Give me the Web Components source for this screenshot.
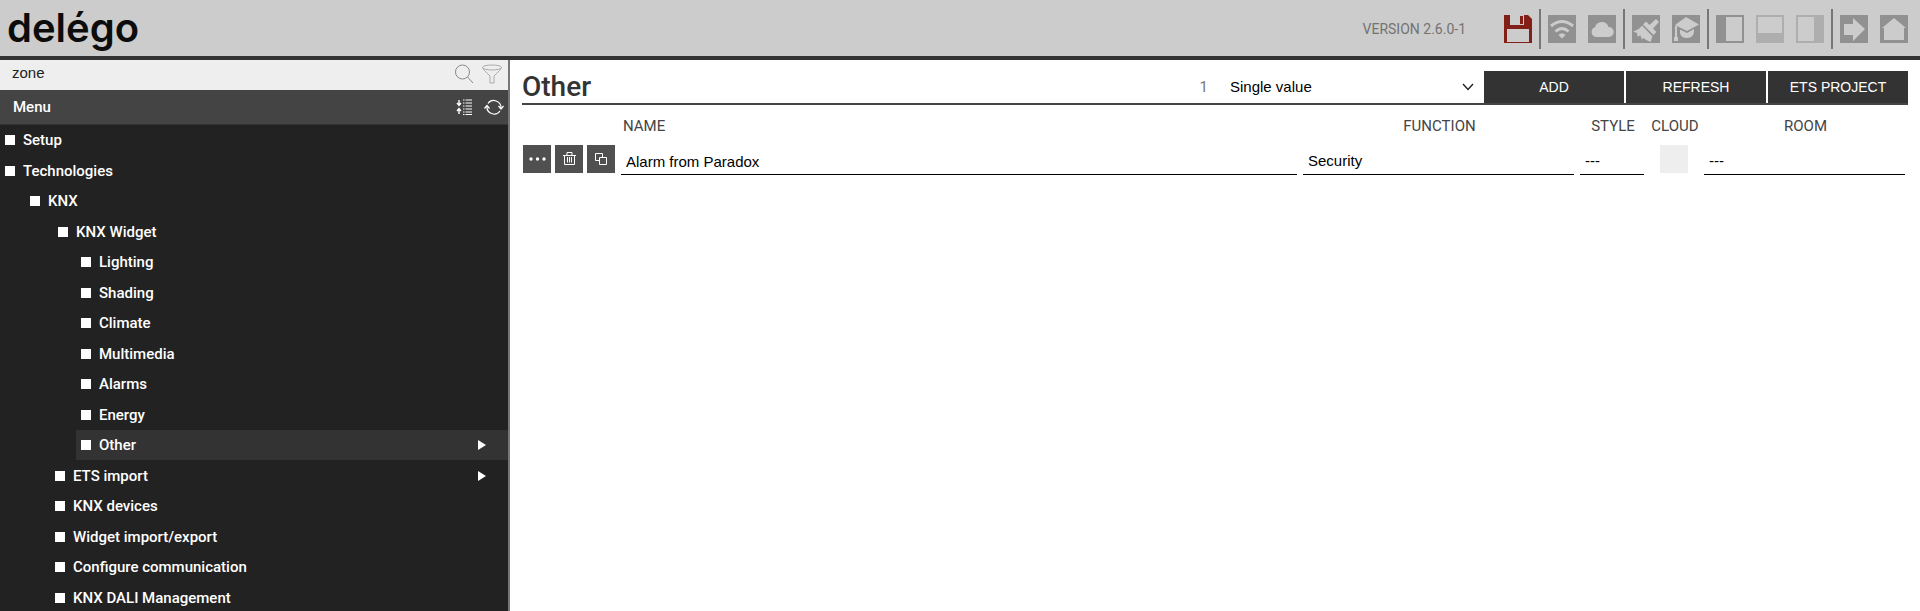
<!DOCTYPE html>
<html lang="en">
<head>
<meta charset="utf-8">
<title>delégo</title>
<style>
html, body { height: 100%; }
body { margin: 0; background: #fff; font-family: Roboto, "Liberation Sans", sans-serif; }
</style>
</head>
<body>
<delego-app></delego-app>
<script>
const define = (name, html, setup) => {
  const t = document.createElement('template');
  t.innerHTML = html;
  customElements.define(name, class extends HTMLElement {
    constructor() {
      super();
      this.attachShadow({ mode: 'open' }).append(t.content.cloneNode(true));
    }
    connectedCallback() { if (setup) setup(this, this.shadowRoot); }
  });
};

/* Toolbar button: a 28px tile with a slotted drawing */
define('tool-button', `
<style>
:host { display: block; }
button { display: block; width: 28px; height: 28px; padding: 0; border: 0; background: none; cursor: pointer; }
</style>
<button type="button"><slot></slot></button>`, (el, root) => {
  root.querySelector('button').setAttribute('aria-label', el.getAttribute('label'));
});

define('app-header', `
<style>
:host { display: flex; align-items: center; justify-content: space-between; box-sizing: border-box; height: 60px;
  padding: 0 12px 0 7px; background: #ccc; border-bottom: 4px solid #333; flex: none; }
a { color: #0c0c0c; text-decoration: none; font: 600 40px/48px Inter, sans-serif; }
nav { display: flex; align-items: center; gap: 12px; padding-top: 2px; }
.version { font-size: 14px; line-height: 20px; color: #737373; margin-right: 26px; }
hr { width: 2px; height: 40px; margin: 0 -5px; border: 0; background: #777; }
svg { display: block; }
</style>
<a href="#">delégo</a>
<nav>
  <span class="version">VERSION 2.6.0-1</span>
  <tool-button label="Save"><svg width="28" height="28"><path fill="#821f17" fill-rule="evenodd" d="M0 0H24L28 4V28H0ZM6 0V10H20V0ZM3 14V27H25V14Z"/><path fill="#ccc" d="M6 0H20V10H6Z"/><path fill="#821f17" d="M16 1H19V9H16Z"/></svg></tool-button>
  <hr>
  <tool-button label="Wi-Fi"><svg width="28" height="28"><path fill="#919191" d="M0 0H28V28H0Z"/><g fill="none" stroke="#ccc" stroke-width="3"><path d="M3 11Q14 2 25 11"/><path d="M7.500 16.500Q14 10.500 20.500 16.500"/></g><path fill="#ccc" d="M10.500 20Q14 16.500 17.500 20L14 23.500Z"/></svg></tool-button>
  <tool-button label="Cloud"><svg width="28" height="28"><path fill="#919191" d="M0 0H28V28H0Z"/><path fill="#ccc" d="M8 22A5 5 0 0 1 7 12.300A7 7 0 0 1 20.500 12A5 5 0 0 1 21 22Z"/></svg></tool-button>
  <hr>
  <tool-button label="Clean"><svg width="28" height="28"><path fill="#919191" d="M0 0H28V28H0Z"/><path fill="#ccc" d="M1 16.500Q7 15 10 10.500L20.500 21.500L18.500 27Q14 25.500 11.500 23L10 24.500L8.500 20.500L5.500 21.500L5 18Z"/><path fill="#ccc" d="M11 9.500L14 6.500L17.500 10L24 4L27 7L21 13.500L24.500 17L21.500 20Z"/></svg></tool-button>
  <tool-button label="Tutorial"><svg width="28" height="28"><path fill="#919191" d="M0 0H28V28H0Z"/><path fill="#ccc" d="M14 2L27 9.500L15 16L3 10ZM8 14.500L15 18L22 14V16Q22 23 15 23Q9 23 8 18ZM3 11H5V22H6V26H2V22H3Z"/></svg></tool-button>
  <hr>
  <tool-button label="Left panel"><svg width="28" height="28"><path fill="#919191" d="M0 0H28V28H0Z"/><path fill="#ccc" d="M10 2H26V26H10Z"/></svg></tool-button>
  <tool-button label="Bottom panel"><svg width="28" height="28"><path fill="#aeaeae" d="M0 0H28V28H0Z"/><path fill="#ccc" d="M2 2H26V18H2Z"/></svg></tool-button>
  <tool-button label="Right panel"><svg width="28" height="28"><path fill="#aeaeae" d="M0 0H28V28H0Z"/><path fill="#ccc" d="M2 2H18V26H2Z"/></svg></tool-button>
  <hr>
  <tool-button label="Go"><svg width="28" height="28"><path fill="#919191" d="M0 0H28V28H0Z"/><path fill="#ccc" d="M4 9H13V3L25 14L13 26V20H4Z"/></svg></tool-button>
  <tool-button label="Home"><svg width="28" height="28"><path fill="#919191" d="M0 0H28V28H0Z"/><path fill="#ccc" d="M14 3L26 13H24V25H4V13H2Z"/></svg></tool-button>
</nav>`);

define('menu-item', `
<style>
:host { display: block; padding-left: var(--indent, 0px); color: #fff; }
:host([level="1"]) { --indent: 25px; }
:host([level="2"]) { --indent: 50px; }
:host([level="2"][open]) { --indent: 53px; }
:host([level="3"]) { --indent: 76px; }
a { display: flex; align-items: center; gap: 8px; box-sizing: border-box; height: 100%; padding: 0 22px 0 5px;
  color: inherit; text-decoration: none; font-size: 15px; line-height: 20px; font-weight: 500; }
:host([selected]) a { background: #333; }
a::before { content: ""; width: 10px; height: 10px; background: #fff; }
svg { display: none; margin-left: auto; }
:host([arrow]) svg { display: block; }
</style>
<a href="#"><slot></slot><svg width="8" height="10"><path fill="#fff" d="M0 0L8 5L0 10Z"/></svg></a>`);

define('side-menu', `
<style>
:host { display: flex; flex-direction: column; box-sizing: border-box; width: 510px; flex: none; overflow: hidden;
  background: #222; border-right: 2px solid #777; }
.search { display: flex; align-items: center; gap: 8px; flex: none; height: 30px; padding: 0 6px 0 12px; background: #eee; }
input { flex: 1; min-width: 0; padding: 0 0 4px; border: 0; outline: 0; background: none; color: #222;
  font: 15px/20px "Liberation Sans", Arial, sans-serif; }
.bar { display: flex; align-items: center; gap: 11px; flex: none; box-sizing: border-box; height: 35px; padding: 0 4px 0 13px;
  background: #444; border-bottom: 1px solid #333; }
h2 { flex: 1; margin: 0; color: #fff; font-size: 15px; line-height: 20px; font-weight: 500; }
button { padding: 0; border: 0; background: none; cursor: pointer; }
svg { display: block; fill: none; }
nav { display: grid; flex: none; grid-auto-rows: 30px 31px; }
</style>
<div class="search">
  <input type="text" value="zone" aria-label="Search menu">
  <button type="button" aria-label="Search"><svg width="20" height="22" stroke="#888"><circle cx="8.500" cy="8" r="7"/><path d="M13.500 13L19 19"/></svg></button>
  <button type="button" aria-label="Filter"><svg width="20" height="22" stroke="#aaa"><ellipse cx="10" cy="3.500" rx="9.500" ry="2.500"/><path d="M.5 3.500Q1 5.500 8 12V19H12V12Q19 5.500 19.500 3.500"/></svg></button>
</div>
<div class="bar">
  <h2>Menu</h2>
  <button type="button" aria-label="Collapse all"><svg width="17" height="16" stroke="#fff"><path d="M3 1V6M1 4L3 6.500L5 4M3 15V10M1 12L3 9.500L5 12" stroke-width="1.400"/><path d="M7 1H8.500M7 4H8.500M7 7H8.500M7 10H8.500M7 13H8.500M7 15.500H8.500M9.500 1H16M9.500 4H16M9.500 7H16M9.500 10H16M9.500 13H16M9.500 15.500H16"/></svg></button>
  <button type="button" aria-label="Reload"><svg width="20" height="18" stroke="#fff" stroke-width="1.200"><path d="M4 5.500A7.200 7.200 0 0 1 17 10M16 13A7.200 7.200 0 0 1 3 8"/><path d="M14.500 8L17 11L19.500 8M.5 10.500L3 7.500L5.500 10.500"/></svg></button>
</div>
<nav>
  <menu-item>Setup</menu-item>
  <menu-item>Technologies</menu-item>
  <menu-item level="1">KNX</menu-item>
  <menu-item level="2" open>KNX Widget</menu-item>
  <menu-item level="3">Lighting</menu-item>
  <menu-item level="3">Shading</menu-item>
  <menu-item level="3">Climate</menu-item>
  <menu-item level="3">Multimedia</menu-item>
  <menu-item level="3">Alarms</menu-item>
  <menu-item level="3">Energy</menu-item>
  <menu-item level="3" selected arrow>Other</menu-item>
  <menu-item level="2" arrow>ETS import</menu-item>
  <menu-item level="2">KNX devices</menu-item>
  <menu-item level="2">Widget import/export</menu-item>
  <menu-item level="2">Configure communication</menu-item>
  <menu-item level="2">KNX DALI Management</menu-item>
</nav>`);

define('page-toolbar', `
<style>
:host { display: flex; align-items: stretch; height: 32px; border-bottom: 2px solid #444; }
h1 { flex: 1; margin: 0; color: #333; font-size: 28px; line-height: 32px; font-weight: 500; }
label { display: flex; align-items: center; gap: 20px; color: #777; font-size: 15px; line-height: 20px; }
.pick { display: flex; align-items: center; }
select { width: 256px; padding: 0 0 0 2px; border: 0; outline: 0; background: none; appearance: none; color: #000;
  font: 15px/20px "Liberation Sans", Arial, sans-serif; }
svg { margin: 0 10px 0 -22px; pointer-events: none; }
.buttons { display: flex; gap: 2px; }
.buttons button { width: 140px; padding: 0; border: 0; background: #333; color: #fff; cursor: pointer;
  font: 14px/20px "Liberation Sans", Arial, sans-serif; }
</style>
<h1>Other</h1>
<label>1
  <span class="pick">
    <select><option>Single value</option></select>
    <svg width="12" height="8" fill="none" stroke="#222" stroke-width="1.400"><path d="M1 1L6 6.500L11 1"/></svg>
  </span>
</label>
<div class="buttons">
  <button type="button">ADD</button>
  <button type="button">REFRESH</button>
  <button type="button">ETS PROJECT</button>
</div>`);

define('widget-table', `
<style>
:host { display: block; }
table { width: 100%; table-layout: fixed; border-collapse: collapse; }
.c-actions { width: 96px; } .c-function { width: 277px; } .c-style { width: 70px; } .c-cloud { width: 54px; } .c-room { width: 207px; }
th { box-sizing: border-box; height: 40px; padding: 2px 0 0 2px; color: #444; font-size: 15px; line-height: 20px; font-weight: 400; text-align: center; }
th.name { padding-left: 5px; text-align: left; }
td { height: 30px; padding: 0 3px; vertical-align: top; }
thead td { height: 40px; box-sizing: border-box; }
td.actions { padding: 0 0 0 1px; }
.actions div { display: flex; gap: 4px; }
button { display: block; width: 28px; height: 28px; padding: 0; border: 0; background: #505050; cursor: pointer; }
svg { display: block; }
input[type=text], select { display: block; box-sizing: border-box; width: 100%; height: 30px; margin: 0; padding: 5px 5px 2px;
  border: 0; border-bottom: 1px solid #000; border-radius: 0; outline: 0; background: none; appearance: none; color: #000;
  font: 15px/20px "Liberation Sans", Arial, sans-serif; }
input[type=checkbox] { display: block; width: 28px; height: 28px; margin: 0 auto; appearance: none; background: #eee; }
</style>
<table>
  <colgroup><col class="c-actions"><col><col class="c-function"><col class="c-style"><col class="c-cloud"><col class="c-room"></colgroup>
  <thead><tr><td></td><th class="name" id="name">NAME</th><th id="function">FUNCTION</th><th id="style">STYLE</th><th id="cloud">CLOUD</th><th id="room">ROOM</th></tr></thead>
  <tbody><tr>
    <td class="actions"><div>
      <button type="button" aria-label="More"><svg width="28" height="28" fill="#fff"><circle cx="8" cy="14" r="1.700"/><circle cx="14.500" cy="14" r="1.700"/><circle cx="21" cy="14" r="1.700"/></svg></button>
      <button type="button" aria-label="Delete"><svg width="28" height="28" fill="none" stroke="#fff"><path d="M8 10.500H21M12 10V7.500H17V10M9.500 10.500V19.500H19.500V10.500M12.500 12V17.500M14.500 12V17.500M16.500 12V17.500"/></svg></button>
      <button type="button" aria-label="Duplicate"><svg width="28" height="28" fill="none" stroke="#fff"><path d="M12 15.500H8.500V8.500H15.500V12M12.500 12.500H19.500V19.500H12.500Z"/></svg></button>
    </div></td>
    <td><input type="text" value="Alarm from Paradox" aria-labelledby="name"></td>
    <td><select aria-labelledby="function"><option>Security</option></select></td>
    <td><select aria-labelledby="style"><option>---</option></select></td>
    <td><input type="checkbox" aria-labelledby="cloud"></td>
    <td><select aria-labelledby="room"><option>---</option></select></td>
  </tr></tbody>
</table>`);

define('delego-app', `
<style>
:host { display: flex; flex-direction: column; height: 100vh; overflow: hidden; }
.body { display: flex; flex: 1; min-height: 0; }
main { flex: 1; min-width: 0; padding: 11px 12px 0 12px; }
</style>
<app-header></app-header>
<div class="body">
  <side-menu></side-menu>
  <main><page-toolbar></page-toolbar><widget-table></widget-table></main>
</div>`);
</script>
</body>
</html>
